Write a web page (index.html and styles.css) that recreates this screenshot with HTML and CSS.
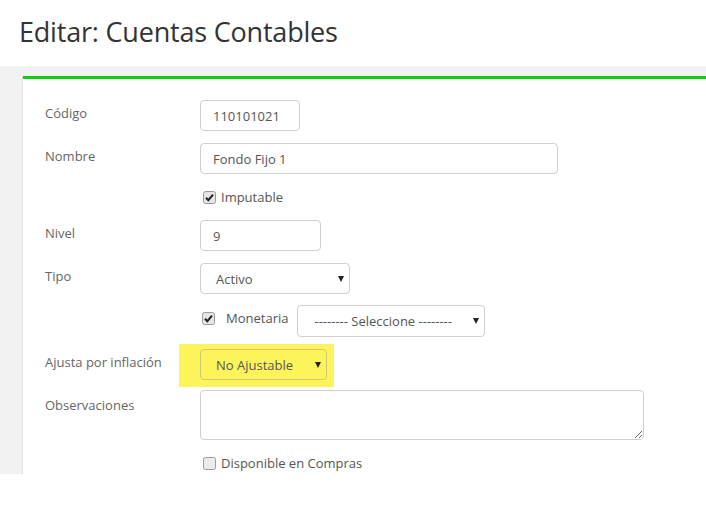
FILE: index.html
```html
<!DOCTYPE html>
<html lang="es">
<head>
    <meta charset="UTF-8">
    <title>Editar: Cuentas Contables</title>
    <link rel="stylesheet" href="styles.css">
</head>
<body>
    <h1 class="page-title">Editar: Cuentas Contables</h1>

    <div class="content">
        <div class="box">
            <form class="form-horizontal">
                <div class="form-row">
                    <label class="row-label" for="codigo">Código</label>
                    <input id="codigo" class="field w-codigo" type="text" value="110101021">
                </div>
                <div class="form-row">
                    <label class="row-label" for="nombre">Nombre</label>
                    <input id="nombre" class="field w-nombre" type="text" value="Fondo Fijo 1">
                </div>
                <div class="form-row check-row">
                    <span class="row-label"></span>
                    <label class="check">
                        <svg class="check-box" width="13" height="13" viewBox="0 0 13 13">
                            <rect x="0.5" y="0.5" width="12" height="12" rx="2" fill="#e6e6e6" stroke="#9a9a9a"/>
                            <path d="M3 6.8 L5.3 9.2 L10 3.6" fill="none" stroke="#222" stroke-width="2"/>
                        </svg>
                        Imputable
                    </label>
                </div>
                <div class="form-row">
                    <label class="row-label" for="nivel">Nivel</label>
                    <input id="nivel" class="field w-nivel" type="text" value="9">
                </div>
                <div class="form-row">
                    <label class="row-label" for="tipo">Tipo</label>
                    <div class="select-wrap w-tipo">
                        <select id="tipo" class="field">
                            <option>Activo</option>
                        </select>
                    </div>
                </div>
                <div class="form-row row-moneda">
                    <span class="row-label"></span>
                    <label class="check monetaria">
                        <svg class="check-box" width="13" height="13" viewBox="0 0 13 13">
                            <rect x="0.5" y="0.5" width="12" height="12" rx="2" fill="#e6e6e6" stroke="#9a9a9a"/>
                            <path d="M3 6.8 L5.3 9.2 L10 3.6" fill="none" stroke="#222" stroke-width="2"/>
                        </svg>
                        Monetaria
                    </label>
                    <div class="select-wrap w-moneda">
                        <select class="field">
                            <option>-------- Seleccione --------</option>
                        </select>
                    </div>
                </div>
                <div class="form-row">
                    <label class="row-label" for="ajuste">Ajusta por inflación</label>
                    <div class="highlight">
                        <div class="select-wrap w-ajuste">
                            <select id="ajuste" class="field">
                                <option>No Ajustable</option>
                            </select>
                        </div>
                    </div>
                </div>
                <div class="form-row">
                    <label class="row-label" for="obs">Observaciones</label>
                    <textarea id="obs" class="field w-obs"></textarea>
                </div>
                <div class="form-row check-row">
                    <span class="row-label"></span>
                    <label class="check">
                        <svg class="check-box" width="13" height="13" viewBox="0 0 13 13">
                            <rect x="0.5" y="0.5" width="12" height="12" rx="2" fill="#ececec" stroke="#9a9a9a"/>
                        </svg>
                        Disponible en Compras
                    </label>
                </div>
            </form>
        </div>
    </div>
</body>
</html>
```

FILE: styles.css
```css
body {
    margin: 0;
    font-family: 'Open Sans', 'Noto Sans', sans-serif;
    background: #fff;
    color: #555;
}
.page-title {
    margin: 0;
    padding: 13px 19px 0;
    height: 66px;
    box-sizing: border-box;
    font-size: 27px;
    font-weight: 400;
    letter-spacing: -0.2px;
    color: #333;
}
.content {
    background: #f2f2f2;
    padding: 10px 0 0 23px;
    height: 408px;
    box-sizing: border-box;
    overflow: hidden;
}
.box {
    background: #fff;
    border-top: 3px solid #11cc11;
    box-shadow: -1px 0 1px rgba(0,0,0,0.06);
    height: 100%;
    padding: 21px 0 0 22px;
    box-sizing: border-box;
}
.form-row {
    display: flex;
    align-items: flex-start;
    margin-bottom: 12px;
}
.row-label {
    flex: 0 0 155px;
    font-size: 13px;
    line-height: 18px;
    padding-top: 4px;
    color: #666;
}
.field {
    display: block;
    box-sizing: border-box;
    height: 31px;
    border: 1px solid #cfcfcf;
    border-radius: 4px;
    background: #fff;
    padding: 0 12px;
    font-family: inherit;
    font-size: 13px;
    color: #555;
    outline: none;
}
.w-codigo { width: 100px; }
.w-nombre { width: 358px; }
.w-nivel { width: 121px; }
.w-obs {
    width: 444px;
    height: 50px;
    resize: vertical;
    margin-top: -2px;
}
.select-wrap {
    position: relative;
}
.select-wrap .field {
    width: 100%;
    appearance: none;
    -webkit-appearance: none;
    padding-left: 15px;
}
.select-wrap::after {
    content: "";
    position: absolute;
    right: 6px;
    top: 13px;
    border-left: 3.5px solid transparent;
    border-right: 3.5px solid transparent;
    border-top: 6px solid #222;
    pointer-events: none;
}
.w-tipo { width: 150px; }
.row-moneda { margin-top: -1px; }
.w-moneda { width: 188px; }
.w-moneda .field { height: 32px; padding-left: 16px; }
.w-ajuste { width: 127px; }
.check-row {
    height: 22px;
    align-items: center;
}
.check {
    display: flex;
    align-items: center;
    font-size: 13px;
    color: #555;
    padding-left: 3px;
}
.check-box {
    margin-right: 5px;
}
.monetaria {
    height: 26px;
    padding-left: 2px;
    margin-right: 9px;
}
.monetaria .check-box {
    margin-right: 11px;
}
.highlight {
    background: #fdf45c;
    margin: -5px 0 -7px -21px;
    padding: 5px 7px 7px 21px;
}
.highlight .field {
    background: transparent;
    border-color: #cfc96a;
}
```
